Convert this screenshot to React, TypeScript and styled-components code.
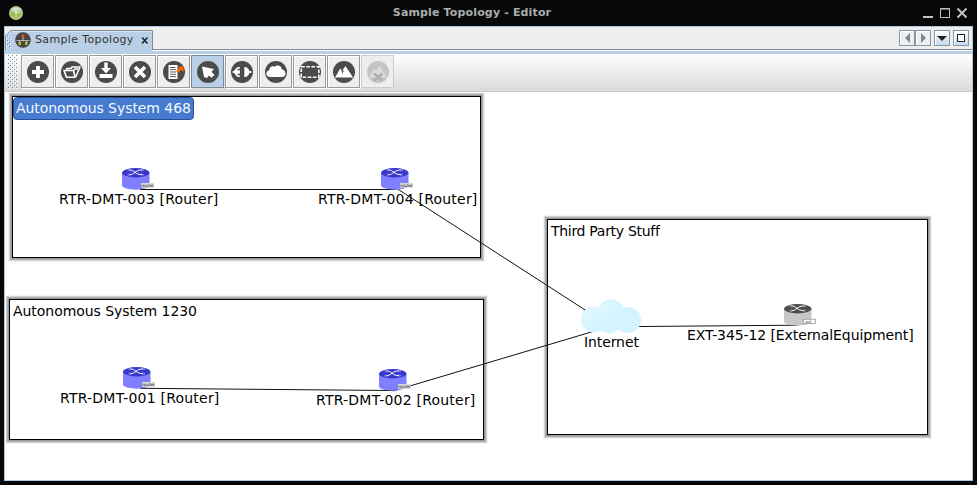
import React from 'react';
import styled, { createGlobalStyle, css } from 'styled-components';

const GlobalStyle = createGlobalStyle`
  * { box-sizing: border-box; }
  body { margin: 0; overflow: hidden; background: #080808; font-family: "DejaVu Sans", sans-serif; }
  svg { display: block; }
`;

const Window = styled.div`
  width: 977px;
  height: 485px;
  display: flex;
  flex-direction: column;
  background: #080808;
`;

const TitleBar = styled.header`
  height: 26px;
  flex: none;
  display: grid;
  grid-template-columns: 60px 1fr 60px;
  align-items: center;
  padding: 0 8px;
`;

const TitleText = styled.h1`
  margin: 0 33px 0 0;
  text-align: center;
  font-size: 11px;
  line-height: 14px;
  font-weight: bold;
  letter-spacing: 0.15px;
  color: #a9aeae;
`;

const WindowControls = styled.div`
  display: flex;
  justify-content: flex-end;
`;

const Frame = styled.main`
  width: 969px;
  height: 455px;
  margin-left: 4px;
  border: 1px solid #a9c9e4;
  display: flex;
  flex-direction: column;
  background: #fff;
`;

const TabStrip = styled.div`
  height: 27px;
  flex: none;
  display: flex;
  justify-content: space-between;
  background: linear-gradient(#eee 22px, #7a8a99 22px, #7a8a99 23px, #fff 23px, #fff 24px, #b8cfe5 24px);
`;

const Tab = styled.div`
  width: 148px;
  height: 24px;
  margin-top: 3px;
  display: flex;
  align-items: center;
  position: relative;
  padding: 0 0 5px 10px;
  font-size: 11px;
  color: #333;
`;

const TabShape = styled.svg`
  position: absolute;
  left: 0;
  top: 0;
  z-index: 0;
`;

const TabLabel = styled.span`
  position: relative;
  margin-left: 4px;
  line-height: 14px;
  width: 106px;
  letter-spacing: 0.36px;
`;

const Layer = styled.span<{ $drop?: number }>`
  position: relative;
  margin-top: ${p => p.$drop ?? 0}px;
`;

const TabButtons = styled.div`
  display: flex;
  padding: 3px 3px 0 0;
`;

const StripButton = styled.button<{ $raised?: boolean; $gap?: number }>`
  width: 16px;
  height: 16px;
  padding: 0;
  margin-left: ${p => p.$gap ?? 0}px;
  display: grid;
  place-items: center;
  border: 1px solid #8496a9;
  background: ${p => (p.$raised ? 'linear-gradient(#fff, #c4d9ec)' : '#eee')};
  box-shadow: inset 1px 1px #fff;
`;

const ToolBar = styled.div`
  height: 38px;
  flex: none;
  display: flex;
  gap: 1px;
  padding: 1px 0 0 3px;
  border-bottom: 1px solid #ccc;
  background: linear-gradient(#fff, #dadada);
`;

const Grip = styled.svg`
  margin-right: 2px;
`;

const ToolButton = styled.button<{ $state?: 'selected' | 'disabled' }>`
  width: 33px;
  height: 33px;
  padding: 0;
  display: grid;
  place-items: center;
  border: 1px solid #999;
  background: #eee;
  box-shadow: inset 1px 1px #fff, 1px 1px #fff;
  ${p => p.$state === 'selected' && css`
    border-color: #7a8a99;
    background: #b8cfe5;
    box-shadow: none;
  `}
  ${p => p.$state === 'disabled' && css`
    border-color: #ccc;
    box-shadow: none;
  `}
`;

const Canvas = styled.section`
  position: relative;
  flex: 1;
  overflow: hidden;
  background: #fff;
  font-size: 14px;
  line-height: 17px;
  color: #000;
  white-space: nowrap;
`;

const Group = styled.div<{ $x: number; $y: number; $w: number; $h: number }>`
  position: absolute;
  left: ${p => p.$x}px;
  top: ${p => p.$y}px;
  width: ${p => p.$w}px;
  height: ${p => p.$h}px;
  border: 1px solid #000;
  background: #fff;
  box-shadow: 0 0 0 1px #999, 0 0 0 2px #aeaeae, 0 0 0 3px #d2d2d2, 0 0 0 4px #f4f4f4;
`;

const GroupTitle = styled.span<{ $selected?: boolean; $tracking: number }>`
  display: inline-block;
  padding: 3px;
  letter-spacing: ${p => p.$tracking}px;
  ${p => p.$selected && css`
    color: #f4f8ff;
    height: 23px;
    padding: 2px 2px;
    background: #467bd0;
    border: 1px solid #275094;
    border-radius: 4px;
  `}
`;

const NodeLabel = styled.span<{ $x: number; $y: number; $tracking: number }>`
  position: absolute;
  left: ${p => p.$x}px;
  top: ${p => p.$y}px;
  letter-spacing: ${p => p.$tracking}px;
`;

const Links = styled.svg`
  position: absolute;
  left: 0;
  top: 0;
`;

const NodeIcon = styled.svg<{ $x: number; $y: number }>`
  position: absolute;
  left: ${p => p.$x}px;
  top: ${p => p.$y}px;
`;

const glyphs: Record<string, React.ReactNode> = {
  add: <path d="M0-6V6M-6 0H6" stroke="#fff" strokeWidth="3.8" />,
  open: (
    <g fill="none" stroke="#fff" strokeWidth="1.6" strokeLinejoin="round">
      <path d="M-8-1.5H1.5L3 5.2H-5.5Z" />
      <path d="M-5.5-1.5L-5-3.5H-1L0-5H8L3.5 5.2M1.5-1.5L3-3H6" />
    </g>
  ),
  save: <path d="M-1.7-9.5H1.7V-4H5L0 1.5L-5-4H-1.7ZM-6.5 2H6.5V6H-6.5Z" fill="#fff" />,
  close: <path d="M-5-5L5 5M5-5L-5 5" stroke="#fff" strokeWidth="3.6" />,
  report: (
    <g>
      <path d="M-5.5-7H3.5V7H-5.5Z" fill="#fff" />
      <path d="M-4-4.5H1.5M-4-2.3H2M-4 0H2M-4 2.3H2M-4 4.6H2" stroke="#4b4b4b" strokeWidth=".9" />
      <path d="M3 0L7-3.5" stroke="#f60" strokeWidth="2.6" />
      <path d="M3.8-5.5H9.5V.2Z" fill="#f60" />
    </g>
  ),
  select: <path d="M-6-5.5L6-3L3.5-.2L6.5 3L3.5 5.8L1 3.6L-1 6L-4 5Z" fill="#fff" />,
  connect: (
    <g fill="#fff">
      <path d="M-2.3-5V5C-6 4.5-8-.5-9 0V-1C-8 0-6-4.5-2.3-5" />
      <path d="M-2.3-5V5C-5.5 5-7 3-7.3 1H-9.3V-1H-7.3C-7-3-5.5-5-2.3-5M2.3-5V5C5.5 5 7 3 7.3 1H9.3V-1H7.3C7-3 5.5-5 2.3-5" />
      <path d="M-4.5-2.5H-2M-4.5 2.5H-2" stroke="#4b4b4b" strokeWidth="1.4" />
    </g>
  ),
  cloud: <path d="M-5.5 5C-11 5-10.5-1.5-6.8-1.8C-6.8-5-3.5-6.5-1.5-5.2C1-8 6-6 5.8-2.8C11-1.5 10.5 5 6 5Z" fill="#fff" />,
  region: (
    <g fill="none" stroke="#fff" strokeWidth="1.6" strokeDasharray="3.6 1.5">
      <rect x="-8.8" y="-5.3" width="17.6" height="10.6" />
    </g>
  ),
  image: <path d="M-9 5.5L-3.8-3.5L-2-1.2L1.5-6L9 5.5Z" fill="#fff" />,
};

function ToolIcon({ kind, disabled }: { kind: string; disabled?: boolean }) {
  return (
    <svg width="24" height="24" viewBox="-12 -12 24 24">
      <circle r="11" fill={disabled ? '#c4c4c4' : '#4b4b4b'} />
      {disabled ? (
        <g>
          <path d="M-9 5.5L-3.8-3.5L-2-1.2L1.5-6L9 5.5Z" fill="#dadada" />
          <path d="M-4 1.5L4.5 8.5M4.5 1.5L-4 8.5" stroke="#aeaeae" strokeWidth="2.5" />
        </g>
      ) : glyphs[kind]}
      {kind === 'image' && <path d="M-2.8-2.2L-1.5 1L-2 4L-.3-1.5" fill="#4b4b4b" />}
    </svg>
  );
}

function Bumps({ id }: { id: string }) {
  return (
    <pattern id={id} width="4" height="4" patternUnits="userSpaceOnUse">
      <path d="M0 0h1v1h-1zM2 2h1v1h-1z" fill="#6f8399" />
      <path d="M1 1h1v1h-1zM3 3h1v1h-1z" fill="#fff" />
    </pattern>
  );
}

function Equipment({ x, y, external }: { x: number; y: number; external?: boolean }) {
  return (
    <NodeIcon $x={x} $y={y} width="34" height="24" viewBox="0 0 34 24">
      <path d="M0 5V17.5C1 23 26 23 27.5 17.5V5Z" fill={external ? '#c8c8c8' : '#7f7fff'} />
      <ellipse cx="13.75" cy="4.8" rx="13.75" ry="4.7" fill={external ? '#4d4d4d' : '#3838cb'} />
      <g fill="none" stroke="#fff">
        <path d="M7.5 1.9C12.5 1.9 13 6.7 20 6.7M7.5 6.7C12.5 6.7 13 1.9 20 1.9" />
        <path d="M8 1L5.5 2L8 3M19.5 1L22 2L19.5 3M8 5.7L5.5 6.7L8 7.7M19.5 5.7L22 6.7L19.5 7.7" strokeWidth=".7" opacity=".45" />
      </g>
      {external ? (
        <g>
          <rect x="19.5" y="15.2" width="12" height="4.4" fill="#fff" stroke="#888" strokeWidth=".7" />
          <text x="21.8" y="18.7" fontSize="3.5" fill="#333">ext</text>
        </g>
      ) : (
        <g>
          <rect x="19" y="15" width="13" height="4.8" fill="#d6d6d6" />
          <text x="19.3" y="18.9" fontSize="4" fill="#222" textLength="12.3">router</text>
        </g>
      )}
    </NodeIcon>
  );
}

function Cloud() {
  return (
    <NodeIcon $x={576} $y={207} width="61" height="36" viewBox="0 0 61 36">
      <defs>
        <linearGradient id="puff" x1="0" y1="0" x2=".65" y2=".65">
          <stop offset="0" stopColor="#c9f0fc" />
          <stop offset=".4" stopColor="#def7ff" />
          <stop offset="1" stopColor="#d3f4ff" />
        </linearGradient>
      </defs>
      <circle cx="47" cy="21" r="13" fill="#d3f4ff" />
      <circle cx="28" cy="21" r="13.5" fill="#d3f4ff" />
      <circle cx="13" cy="20.5" r="13" fill="url(#puff)" />
      <circle cx="30" cy="13.3" r="13" fill="url(#puff)" />
      <path d="M20 22H48V30H20Z" fill="#d3f4ff" />
    </NodeIcon>
  );
}

const tools = ['add', 'open', 'save', 'close', 'report', 'select', 'connect', 'cloud', 'region', 'image', 'removeImage'];

const equipment = [
  { name: 'RTR-DMT-003 [Router]', x: 117, y: 76, lx: 54, ly: 99, tracking: 0.22 },
  { name: 'RTR-DMT-004 [Router]', x: 376, y: 76, lx: 313, ly: 99, tracking: 0.22 },
  { name: 'RTR-DMT-001 [Router]', x: 118, y: 275, lx: 55, ly: 298, tracking: 0.22 },
  { name: 'RTR-DMT-002 [Router]', x: 374, y: 277, lx: 311, ly: 300, tracking: 0.22 },
  { name: 'EXT-345-12 [ExternalEquipment]', x: 779, y: 212, lx: 682, ly: 235, tracking: -0.1, external: true },
];

export default function App() {
  return (
    <Window>
      <GlobalStyle />
      <TitleBar>
        <svg width="16" height="16" viewBox="0 0 16 16">
          <circle cx="8" cy="8" r="7" fill="#b3c68c" />
          <path d="M2 5Q8 0 14 5L9 5L8 8L6 5Z" fill="#d5dfc7" />
          <path d="M3 8L6 6L7 12L3 11M9 7L13 8L12 12L9 11" fill="#9abb3f" />
          <path d="M8 3V9M5 6L11 8" stroke="#dfe6d2" strokeWidth="1.1" />
        </svg>
        <TitleText>Sample Topology - Editor</TitleText>
        <WindowControls>
          <svg width="47" height="14" viewBox="0 0 47 14" fill="none" stroke="#c1c1c1">
            <path d="M1 11H11" strokeWidth="2" />
            <path d="M18.5 2.5H27.5V11.5H18.5ZM18 3H28" />
            <path d="M35.5 2.5L44.5 11.5M44.5 2.5L35.5 11.5" strokeWidth="2" />
          </svg>
        </WindowControls>
      </TitleBar>
      <Frame>
        <TabStrip>
          <Tab>
            <TabShape width="148" height="21" viewBox="0 0 148 21">
              <defs><Bumps id="tabBumps" /></defs>
              <path d="M0 21V6L6 .5H147.5V21Z" fill="#b8cfe5" />
              <path d="M.5 20V6L6 .5H147.5V20" fill="none" stroke="#7a8a99" />
              <path d="M1.5 20V6.5L6.5 1.5H146" fill="none" stroke="#dce9f5" />
              <rect x="2" y="6" width="4" height="12" fill="url(#tabBumps)" />
            </TabShape>
            <Layer>
              <svg width="16" height="16" viewBox="0 0 16 16">
                <circle cx="8" cy="8" r="7.8" fill="#484542" />
                <path d="M1.5 8.5H14.5M8 4V9.5M4.5 8V11M11.5 8V11" stroke="#b4b4b4" strokeWidth="1.2" />
                <path d="M6.7 2.5H9.3V5.2H6.7Z" fill="#f4510b" />
                <path d="M3.5 10H6V13H3.5ZM10 10H12.5V13H10Z" fill="#a6cf1c" />
              </svg>
            </Layer>
            <TabLabel>Sample Topology</TabLabel>
            <Layer $drop={2}>
              <svg width="8" height="8" viewBox="0 0 8 8">
                <path d="M1.5 1L6 6M6 1L1.5 6" stroke="#222" strokeWidth="1.5" />
                <path d="M.5 1H2.5M5 1H7M.5 6H2.5M5 6H7" stroke="#222" strokeWidth=".8" />
              </svg>
            </Layer>
          </Tab>
          <TabButtons>
            <StripButton><svg width="10" height="10"><path d="M8 0V10L3 5Z" fill="#778899" /></svg></StripButton>
            <StripButton><svg width="10" height="10"><path d="M3 0V10L8 5Z" fill="#778899" /></svg></StripButton>
            <StripButton $raised $gap={3}><svg width="10" height="10"><path d="M0 3H10L5 8Z" fill="#222" /></svg></StripButton>
            <StripButton $raised $gap={3}><svg width="10" height="10"><rect x="1.5" y="1.5" width="7" height="7" fill="#fff" stroke="#222" /></svg></StripButton>
          </TabButtons>
        </TabStrip>
        <ToolBar>
          <Grip width="10" height="34">
            <defs><Bumps id="gripBumps" /></defs>
            <rect width="10" height="34" fill="url(#gripBumps)" />
          </Grip>
          {tools.map(kind => (
            <ToolButton
              key={kind}
              aria-label={kind}
              $state={kind === 'select' ? 'selected' : kind === 'removeImage' ? 'disabled' : undefined}
            >
              <ToolIcon kind={kind} disabled={kind === 'removeImage'} />
            </ToolButton>
          ))}
        </ToolBar>
        <Canvas>
          <Group $x={7} $y={4} $w={469} $h={162}><GroupTitle $selected $tracking={-0.06}>Autonomous System 468</GroupTitle></Group>
          <Group $x={4} $y={207} $w={475} $h={141}><GroupTitle $tracking={-0.05}>Autonomous System 1230</GroupTitle></Group>
          <Group $x={542} $y={127} $w={381} $h={216}><GroupTitle $tracking={-0.3}>Third Party Stuff</GroupTitle></Group>
          {equipment.map(e => <NodeLabel key={e.name} $x={e.lx} $y={e.ly} $tracking={e.tracking}>{e.name}</NodeLabel>)}
          <NodeLabel $x={579} $y={242} $tracking={-0.1}>Internet</NodeLabel>
          <Links width="967" height="388" fill="none" stroke="#111">
            <path d="M135 97.5H391" />
            <path d="M391 96L581 218.5" />
            <path d="M135 296.3L388 298.5" />
            <path d="M388 299L588 239.5" />
            <path d="M634 234.5L793 233.2" />
          </Links>
          {equipment.map(e => <Equipment key={e.name} x={e.x} y={e.y} external={e.external} />)}
          <Cloud />
        </Canvas>
      </Frame>
    </Window>
  );
}
